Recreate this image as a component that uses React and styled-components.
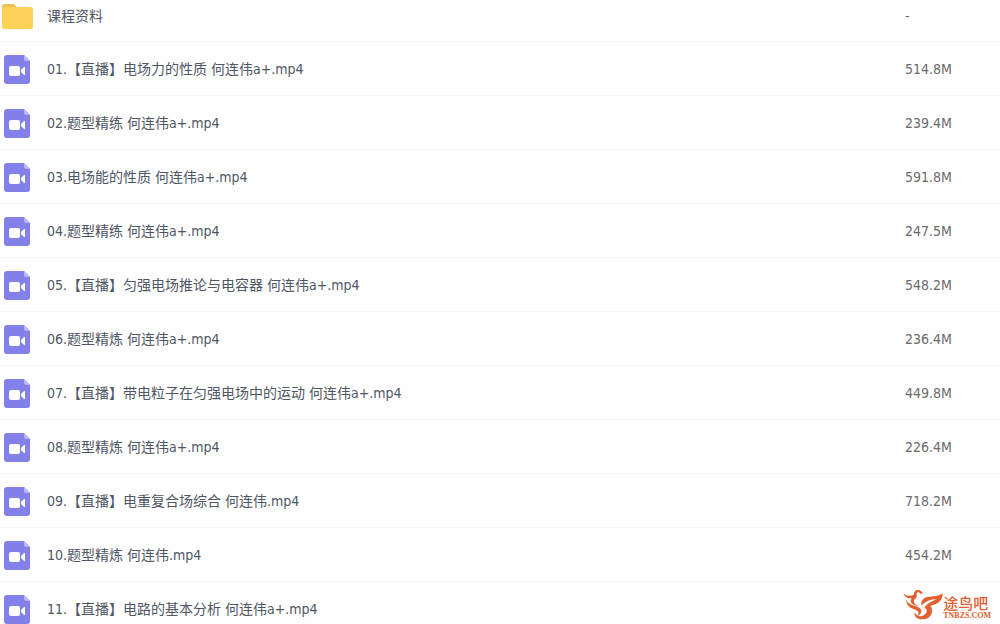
import React from "react";
import styled, { createGlobalStyle } from "styled-components";

const GlobalStyle = createGlobalStyle`
  body {
    margin: 0;
    background: #fefefe;
    font-family: "DejaVu Sans Condensed", "Noto Sans CJK SC", sans-serif;
    font-size: 14px;
    line-height: 20px;
    color: #4f5664;
  }
`;

const Page = styled.main`
  position: relative;
`;

const FileTable = styled.table`
  width: 100%;
  border-collapse: separate;
  border-spacing: 0;
  table-layout: fixed;
`;

const FileRow = styled.tr`
  height: ${(p) => (p.$folder ? 42 : 54)}px;

  &:last-child {
    height: 42px;
  }
`;

const Cell = styled.td`
  box-sizing: border-box;
  padding: ${(p) => (p.$folder ? 6 : 17)}px 0 0;
  vertical-align: top;
  border-bottom: 1px solid #f5f6f8;

  tr:last-child > & {
    border-bottom: 0;
  }
`;

const IconCell = styled(Cell)`
  width: 47px;
  padding: ${(p) => (p.$folder ? "4px 0 0 2px" : "13px 0 0 4px")};
`;

const SizeCell = styled(Cell)`
  width: 95px;
  color: #6a6a6c;
`;

const FileLink = styled.a`
  color: inherit;
  text-decoration: none;

  &:hover {
    color: #7c7ce8;
  }
`;

const Icon = styled.svg`
  display: block;
`;

const Watermark = styled.a`
  position: absolute;
  right: 9px;
  bottom: 4px;
  display: flex;
  align-items: flex-end;
  color: #e0602f;
  text-decoration: none;
`;

const Brand = styled.span`
  display: flex;
  flex-direction: column;
`;

const BrandName = styled.span`
  font-family: "Noto Sans CJK SC", sans-serif;
  font-size: 15px;
  font-weight: 500;
  line-height: 18px;
`;

const BrandSite = styled.span`
  font-family: "Liberation Serif", serif;
  font-size: 8px;
  font-weight: 700;
  line-height: 8px;
`;

function FolderIcon() {
  return (
    <Icon width="31" height="26" viewBox="0 0 31 26" aria-hidden="true">
      <path d="M0 3Q0 0 3 0H11Q13 0 14 2L15 4H0Z" fill="#ecc157" />
      <path d="M0 3H28Q31 3 31 6V23Q31 25 29 25H2Q0 25 0 23Z" fill="#fdd258" />
    </Icon>
  );
}

function VideoIcon() {
  return (
    <Icon width="26" height="29" viewBox="0 0 26 29" aria-hidden="true">
      <path d="M3 0H20L26 6V26Q26 29 23 29H3Q0 29 0 26V3Q0 0 3 0Z" fill="#8380ea" />
      <path d="M20 0L26 6H22Q20 6 20 4Z" fill="#b9b7f7" />
      <rect x="5" y="11" width="11" height="10" rx="2" fill="#fff" />
      <path d="M17 15L20 12Q21 11 21 13V19Q21 21 20 20L17 17Z" fill="#fff" />
    </Icon>
  );
}

function BirdLogo() {
  return (
    <Icon width="40" height="31" viewBox="8 14 120 93" fill="#e0602f" aria-hidden="true">
      <path d="M9 26C15 35 29 37 41 31C40 20 48 16 56 17C62 18 63 23 69 27L60 28C58 24 54 22 50 25C46 30 54 35 46 42C36 50 41 59 54 66C34 62 27 53 34 41C23 44 12 38 9 26Z" />
      <path d="M17 46C24 59 37 63 51 67C68 73 66 90 52 94C57 84 54 79 45 76C29 71 19 64 17 46Z" />
      <path d="M127 27C127 48 114 60 90 64C102 80 93 104 67 105C50 106 39 96 44 83C46 94 57 98 67 94C80 89 84 75 72 70C84 53 99 50 110 43C92 46 74 49 64 64C59 48 71 38 88 37C105 36 116 35 127 27Z" />
    </Icon>
  );
}

const files = [
  { name: "课程资料", size: "-", folder: true },
  { name: "01.【直播】电场力的性质 何连伟a+.mp4", size: "514.8M" },
  { name: "02.题型精练 何连伟a+.mp4", size: "239.4M" },
  { name: "03.电场能的性质 何连伟a+.mp4", size: "591.8M" },
  { name: "04.题型精练 何连伟a+.mp4", size: "247.5M" },
  { name: "05.【直播】匀强电场推论与电容器 何连伟a+.mp4", size: "548.2M" },
  { name: "06.题型精炼 何连伟a+.mp4", size: "236.4M" },
  { name: "07.【直播】带电粒子在匀强电场中的运动 何连伟a+.mp4", size: "449.8M" },
  { name: "08.题型精炼 何连伟a+.mp4", size: "226.4M" },
  { name: "09.【直播】电重复合场综合 何连伟.mp4", size: "718.2M" },
  { name: "10.题型精炼 何连伟.mp4", size: "454.2M" },
  { name: "11.【直播】电路的基本分析 何连伟a+.mp4", size: "" },
];

export default function App() {
  return (
    <Page>
      <GlobalStyle />
      <FileTable>
        <tbody>
          {files.map(({ name, size, folder }) => (
            <FileRow key={name} $folder={folder}>
              <IconCell $folder={folder}>{folder ? <FolderIcon /> : <VideoIcon />}</IconCell>
              <Cell $folder={folder}>
                <FileLink href="#">{name}</FileLink>
              </Cell>
              <SizeCell $folder={folder}>{size}</SizeCell>
            </FileRow>
          ))}
        </tbody>
      </FileTable>
      <Watermark href="#">
        <BirdLogo />
        <Brand>
          <BrandName>途鸟吧</BrandName>
          <BrandSite>TNBZS.COM</BrandSite>
        </Brand>
      </Watermark>
    </Page>
  );
}
